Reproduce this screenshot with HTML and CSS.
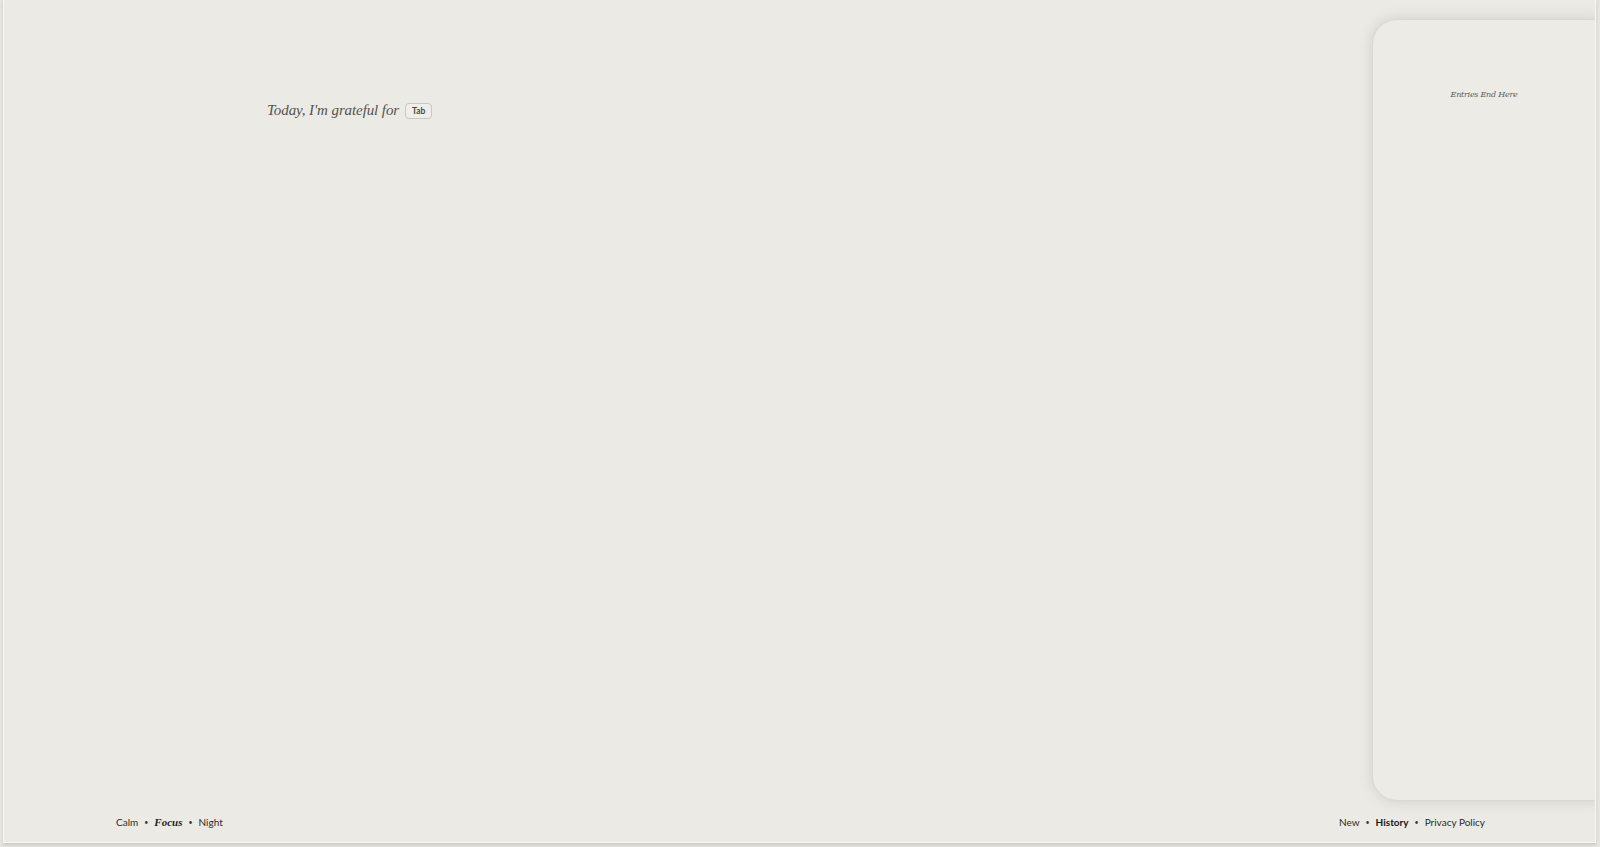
FILE: index.html
```html
<!DOCTYPE html>
<html lang="en">
<head>
<meta charset="utf-8">
<title>Gratitude</title>
<link rel="stylesheet" href="styles.css">
</head>
<body>
<div class="frame">
  <main class="main">
    <div class="prompt">
      <span class="prompt-text">Today, I'm grateful for</span>
      <span class="kbd">Tab</span>
    </div>
  </main>
  <aside class="drawer">
    <p class="drawer-end">Entries End Here</p>
  </aside>
  <footer class="footer">
    <nav class="modes">
      <span class="link">Calm</span>
      <span class="dot">•</span>
      <span class="link focus">Focus</span>
      <span class="dot">•</span>
      <span class="link">Night</span>
    </nav>
    <nav class="actions">
      <span class="link">New</span>
      <span class="dot">•</span>
      <span class="link strong">History</span>
      <span class="dot">•</span>
      <span class="link">Privacy Policy</span>
    </nav>
  </footer>
</div>
</body>
</html>
```
FILE: styles.css
```css
html, body {
  margin: 0;
  padding: 0;
}
body {
  width: 1600px;
  height: 847px;
  background: #e6e5e0;
  overflow: hidden;
}
.frame {
  position: relative;
  margin-left: 4px;
  width: 1591px;
  height: 842px;
  background: #ebeae5;
  box-shadow: 0 0 0 1px #f7f7f5, 0 2px 3px 1px rgba(0, 0, 0, 0.12);
  display: flex;
  flex-direction: column;
  overflow: hidden;
}
.main {
  flex: 1;
  padding: 102px 0 0 263px;
}
.prompt {
  display: flex;
  align-items: center;
  gap: 6px;
}
.prompt-text {
  font-family: "Liberation Serif", "DejaVu Serif", serif;
  font-style: italic;
  font-size: 15px;
  color: #55524d;
  letter-spacing: -0.1px;
}
.kbd {
  font-family: "Lato", "Liberation Sans", sans-serif;
  font-weight: 700;
  font-size: 8.5px;
  color: #4a4844;
  background: #efeeea;
  border: 1px solid #c9c7c1;
  border-radius: 4px;
  padding: 3px 6px 2px;
  line-height: 9px;
  margin-top: 1px;
}
.drawer {
  position: absolute;
  top: 20px;
  left: 1369px;
  right: -20px;
  height: 780px;
  background: #ecebe6;
  border-radius: 24px;
  box-shadow: 0 0 16px rgba(0, 0, 0, 0.13), 0 0 3px rgba(0, 0, 0, 0.05);
  padding-right: 20px;
  box-sizing: border-box;
}
.drawer-end {
  margin: 70px 0 0;
  text-align: center;
  font-family: "DejaVu Serif", "Liberation Serif", serif;
  font-style: italic;
  font-size: 8px;
  color: #5e5b56;
  letter-spacing: -0.25px;
}
.footer {
  display: flex;
  justify-content: space-between;
  align-items: center;
  padding: 0 110px 14px 112px;
  height: 12px;
  font-family: "Lato", "Liberation Sans", sans-serif;
  font-size: 10px;
  color: #2b2a28;
}
.modes, .actions {
  display: flex;
  align-items: center;
  gap: 6px;
}
.dot {
  font-size: 7px;
  color: #3a3935;
}
.focus {
  font-family: "Liberation Serif", "DejaVu Serif", serif;
  font-style: italic;
  font-weight: 700;
  font-size: 11px;
  color: #1f1e1c;
}
.strong {
  font-weight: 700;
  color: #1a1918;
}
```
